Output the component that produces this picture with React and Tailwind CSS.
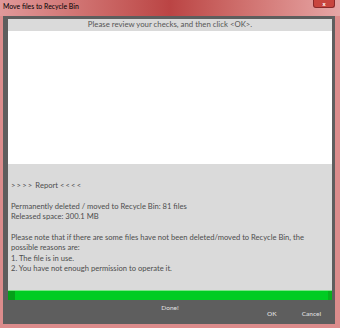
import React from 'react';

const font = { fontFamily: 'Lato, "Open Sans", sans-serif' };

const ReportLines = [
  '',
  'Permanently deleted / moved to Recycle Bin: 81 files',
  'Released space: 300.1 MB',
  '',
  'Please note that if there are some files have not been deleted/moved to Recycle Bin, the',
  'possible reasons are:',
  '1. The file is in use.',
  '2. You have not enough permission to operate it.',
];

const App = () => {
  return (
    <div
      className="w-[340px] h-[328px] flex flex-col bg-[#dc8c8c] pl-[3px] pr-[5px] pb-[4px] overflow-hidden"
      style={font}
    >
      {/* title bar */}
      <div className="relative h-[16px] shrink-0 -ml-[3px] -mr-[5px] bg-gradient-to-r from-[#e0999a] via-[#bb4444] to-[#e6a6a6]">
        <p className="absolute left-[3px] top-[2px] text-[6.9px] leading-[9px] text-black">
          Move files to Recycle Bin
        </p>
        <div className="absolute right-[5px] top-0 w-[22px] h-[8px] rounded-b-[3px] bg-[#c8453e] border border-t-0 border-[#8a2a2a] flex items-center justify-center">
          <span className="text-[6px] leading-none font-bold text-white">x</span>
        </div>
      </div>

      <div className="flex-1 flex flex-col bg-[#5e5e5e] pt-[3px] pl-[5px] pr-[3px]">
        <div className="flex flex-col bg-[#dadada]">
          <div className="h-[12px] flex items-center justify-center text-[7.8px] text-[#555]">
            Please review your checks, and then click &lt;OK&gt;.
          </div>
          <div className="h-[133px] bg-white" />
          <div className="h-[126px] pt-[16px] pl-[3px] text-[7.6px] leading-[10.4px] text-[#4d4d4d]">
            <p className="h-[10.4px] whitespace-nowrap">
              <span className="tracking-[1.2px]">&gt;&gt;&gt;&gt;</span> Report{' '}
              <span className="tracking-[1.2px]">&lt;&lt;&lt;&lt;</span>
            </p>
            {ReportLines.map((line, i) => (
              <p key={i} className="h-[10.4px] whitespace-nowrap">
                {line}
              </p>
            ))}
          </div>
          <div className="h-[10px] bg-[#00cc22] border-t-[1px] border-[#7ae486] flex justify-between">
            <div className="w-[7px] bg-[#05a01a]" />
            <div className="w-[4px] bg-[#07b01c]" />
          </div>
        </div>
        <div className="flex-1 relative">
          <p className="absolute left-0 right-0 top-[3px] text-center text-[6.5px] text-[#e0e0e0]">
            Done!
          </p>
          <div className="absolute right-[11px] top-[9px] flex gap-[25px] text-[6.5px] font-semibold text-[#d8d8d8]">
            <span>OK</span>
            <span>Cancel</span>
          </div>
        </div>
      </div>
    </div>
  );
};

export default App;
